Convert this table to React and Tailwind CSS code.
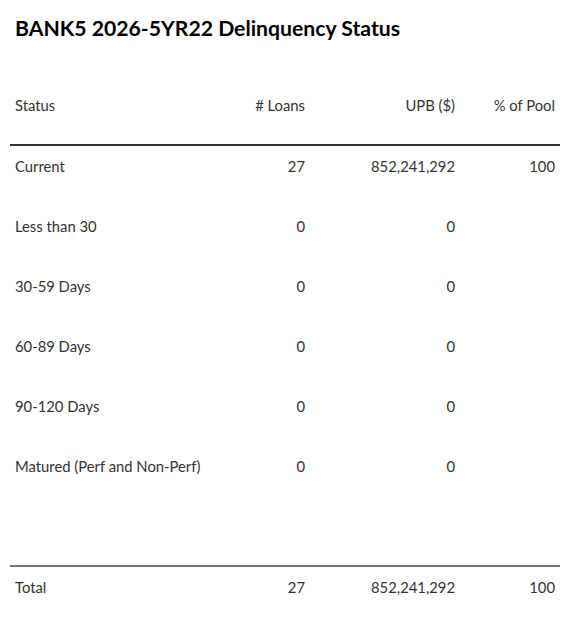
const rows = [
  { status: "Current", loans: "27", upb: "852,241,292", pool: "100" },
  { status: "Less than 30", loans: "0", upb: "0", pool: "" },
  { status: "30-59 Days", loans: "0", upb: "0", pool: "" },
  { status: "60-89 Days", loans: "0", upb: "0", pool: "" },
  { status: "90-120 Days", loans: "0", upb: "0", pool: "" },
  { status: "Matured (Perf and Non-Perf)", loans: "0", upb: "0", pool: "" },
  { status: "", loans: "", upb: "", pool: "" },
];

function Row({ r, className = "h-[60px] pt-[10px]" }) {
  return (
    <div className={`flex leading-5 ${className}`}>
      <div className="w-[200px] px-[5px]">{r.status}</div>
      <div className="w-[100px] px-[5px] text-right">{r.loans}</div>
      <div className="w-[150px] px-[5px] text-right">{r.upb}</div>
      <div className="w-[100px] px-[5px] text-right">{r.pool}</div>
    </div>
  );
}

export default function App() {
  return (
    <div
      className="w-[570px] h-[637px] bg-white text-[#333333] px-[10px]"
      style={{ fontFamily: "Lato, 'Liberation Sans', sans-serif" }}
    >
      <h1 className="pt-[14px] px-[5px] text-[21.2px] leading-7 font-bold text-black">
        BANK5 2026-5YR22 Delinquency Status
      </h1>
      <div className="mt-[42px] w-[550px] text-[14.8px]">
        <Row
          r={{ status: "Status", loans: "# Loans", upb: "UPB ($)", pool: "% of Pool" }}
          className="h-[62px] pt-[11px] border-b-2 border-[#333333]"
        />
        {rows.map((r, i) => (
          <Row
            key={i}
            r={r}
            className={
              i === rows.length - 1
                ? "h-[61px] pt-[10px] border-b-2 border-[#777777]"
                : "h-[60px] pt-[10px]"
            }
          />
        ))}
        <Row r={{ status: "Total", loans: "27", upb: "852,241,292", pool: "100" }} />
      </div>
    </div>
  );
}
